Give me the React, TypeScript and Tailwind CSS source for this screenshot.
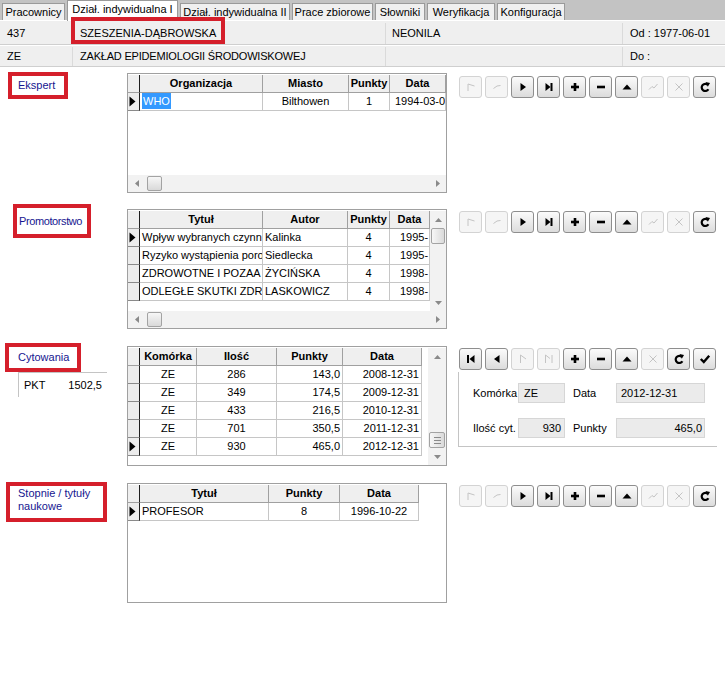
import React from 'react';

type Col = { title: string; w: string; cell: string };

const tabs = [
  { label: 'Pracownicy', w: 'w-[63px]' },
  { label: 'Dział. indywidualna I', w: 'w-[111px]', active: true },
  { label: 'Dział. indywidualna II', w: 'w-[110px]' },
  { label: 'Prace zbiorowe', w: 'w-[81px]' },
  { label: 'Słowniki', w: 'w-[50px]' },
  { label: 'Weryfikacja', w: 'w-[68px]' },
  { label: 'Konfiguracja', w: 'w-[68px]' },
];

const navStd = ['xfirst', 'xprior', 'next', 'last', 'plus', 'minus', 'up', 'xpost', 'xcancel', 'refresh'];
const navCyt = ['first', 'prior', 'xnext', 'xlast', 'plus', 'minus', 'up', 'xcancel', 'refresh', 'post'];

function Icon({ name }: { name: string }) {
  const g = '#c4c4c4';
  return (
    <svg width="14" height="14" viewBox="0 0 14 14">
      {name === 'first' && (
        <>
          <rect x="3" y="3" width="2" height="8" fill="#000" />
          <polygon points="10.5,3 5.5,7 10.5,11" fill="#000" />
        </>
      )}
      {name === 'prior' && <polygon points="9.5,3 4,7 9.5,11" fill="#000" />}
      {name === 'next' && <polygon points="4.5,3 10,7 4.5,11" fill="#000" />}
      {name === 'last' && (
        <>
          <polygon points="3.5,3 8.5,7 3.5,11" fill="#000" />
          <rect x="8.5" y="3" width="2" height="8" fill="#000" />
        </>
      )}
      {name === 'plus' && (
        <>
          <rect x="3" y="5.7" width="8" height="2.6" fill="#000" />
          <rect x="5.7" y="3" width="2.6" height="8" fill="#000" />
        </>
      )}
      {name === 'minus' && <rect x="3" y="5.7" width="8" height="2.6" fill="#000" />}
      {name === 'up' && <polygon points="2.5,9.5 7,4.5 11.5,9.5" fill="#000" />}
      {name === 'post' && <polyline points="2.8,7 5.8,10 11.2,3.8" fill="none" stroke="#000" strokeWidth="2.4" />}
      {name === 'refresh' && (
        <>
          <path d="M10 5 A3.6 3.6 0 1 0 10.4 9.2" fill="none" stroke="#000" strokeWidth="2.2" />
          <polygon points="7.6,2 12,3 9.8,6.8" fill="#000" />
        </>
      )}
      {name === 'xfirst' && <path d="M4 11 V4 L10.5 6" fill="none" stroke={g} strokeWidth="1" />}
      {name === 'xprior' && <path d="M3.5 8.5 L7 6 L10.5 5.5" fill="none" stroke={g} strokeWidth="1" />}
      {name === 'xnext' && <path d="M4.5 11 V3 L10 7" fill="none" stroke={g} strokeWidth="1" />}
      {name === 'xlast' && <path d="M3.5 11 V3 L8 6.5 M10 3 V11" fill="none" stroke={g} strokeWidth="1" />}
      {name === 'xpost' && <path d="M3 9.5 L6 6.5 L8 8 L11.5 4" fill="none" stroke={g} strokeWidth="1" />}
      {name === 'xcancel' && <path d="M3.5 3.5 L10.5 10.5 M10.5 3.5 L3.5 10.5" fill="none" stroke={g} strokeWidth="1" />}
    </svg>
  );
}

function Navigator({ icons }: { icons: string[] }) {
  return (
    <div className="flex gap-[3px]">
      {icons.map((n, i) => (
        <div
          key={i}
          className={
            n.startsWith('x')
              ? 'flex h-[22px] w-[23px] items-center justify-center rounded-[3px] border border-[#d3d3d3] bg-[#f5f5f5]'
              : 'flex h-[22px] w-[23px] items-center justify-center rounded-[3px] border border-[#8e8e8e] bg-linear-to-b from-[#fbfbfb] to-[#dcdcdc]'
          }
        >
          <Icon name={n} />
        </div>
      ))}
    </div>
  );
}

function Pointer() {
  return (
    <svg width="7" height="11" viewBox="0 0 7 11">
      <polygon points="0.5,0.5 6.5,5.5 0.5,10.5" fill="#000" />
    </svg>
  );
}

function HScroll() {
  return (
    <div className="flex h-[17px] shrink-0 items-center bg-[#f2f2f2]">
      <div className="flex w-[17px] justify-center">
        <svg width="4" height="7" viewBox="0 0 4 7">
          <polygon points="4,0 0,3.5 4,7" fill="#8a8a8a" />
        </svg>
      </div>
      <div className="ml-[2px] h-[15px] w-[15px] rounded-[2px] border border-[#a3a3a3] bg-linear-to-b from-[#f7f7f7] to-[#d9d9d9]" />
      <div className="flex-1" />
      <div className="flex w-[17px] justify-center">
        <svg width="4" height="7" viewBox="0 0 4 7">
          <polygon points="0,0 4,3.5 0,7" fill="#8a8a8a" />
        </svg>
      </div>
    </div>
  );
}

function VScroll({ thumb, w }: { thumb: 'top' | 'bottom'; w: string }) {
  const up = (
    <div className="flex h-[17px] items-center justify-center">
      <svg width="7" height="4" viewBox="0 0 7 4">
        <polygon points="0,4 3.5,0 7,4" fill="#8a8a8a" />
      </svg>
    </div>
  );
  const down = (
    <div className="flex h-[17px] items-center justify-center">
      <svg width="7" height="4" viewBox="0 0 7 4">
        <polygon points="0,0 3.5,4 7,0" fill="#8a8a8a" />
      </svg>
    </div>
  );
  const bar = (
    <div className="mx-px flex h-[16px] flex-col items-center justify-center gap-[2px] rounded-[2px] border border-[#a3a3a3] bg-linear-to-r from-[#f7f7f7] to-[#dadada]">
      {thumb === 'bottom' && (
        <>
          <div className="h-px w-[7px] bg-[#8a8a8a]" />
          <div className="h-px w-[7px] bg-[#8a8a8a]" />
          <div className="h-px w-[7px] bg-[#8a8a8a]" />
        </>
      )}
    </div>
  );
  return (
    <div className={`${w} flex shrink-0 flex-col bg-[#f2f2f2]`}>
      {up}
      {thumb === 'top' && bar}
      <div className="flex-1" />
      {thumb === 'bottom' && bar}
      {down}
    </div>
  );
}

function Grid({
  cols,
  rows,
  current,
  hScroll,
  vScroll,
  vw,
  selectFirst,
}: {
  cols: Col[];
  rows: string[][];
  current: number;
  hScroll?: boolean;
  vScroll?: 'top' | 'bottom';
  vw?: string;
  selectFirst?: boolean;
}) {
  return (
    <div className="flex h-[120px] w-[320px] flex-col border border-[#a0a0a0] bg-white pt-px">
      <div className="flex min-h-0 flex-1">
        <div className="min-w-0 flex-1 overflow-hidden">
          <div className="flex h-[18px]">
            <div className="h-[18px] w-[12px] shrink-0 border-r border-b border-r-[#1e1e1e] border-b-[#a0a0a0] bg-[#efefef]" />
            {cols.map((c) => (
              <div
                key={c.title}
                className={`${c.w} h-[18px] shrink-0 overflow-hidden whitespace-nowrap border-r border-b border-[#a0a0a0] bg-[#efefef] text-center font-bold leading-[17px]`}
              >
                {c.title}
              </div>
            ))}
          </div>
          {rows.map((r, i) => (
            <div key={i} className="flex h-[18px]">
              <div className="flex h-[18px] w-[12px] shrink-0 items-center justify-start border-r border-b border-r-[#1e1e1e] border-b-[#8a8a8a] bg-[#ececec] pl-px">
                {i === current && <Pointer />}
              </div>
              {cols.map((c, j) => (
                <div
                  key={j}
                  className={`${c.w} ${c.cell} h-[18px] shrink-0 overflow-hidden whitespace-nowrap border-r border-b border-[#c6c6c6] leading-[17px]`}
                >
                  {selectFirst && i === 0 && j === 0 ? (
                    <span className="inline-block h-[16px] bg-[#3399ff] px-px leading-[16px] text-white">{r[j]}</span>
                  ) : (
                    r[j]
                  )}
                </div>
              ))}
            </div>
          ))}
        </div>
        {vScroll && <VScroll thumb={vScroll} w={vw ?? 'w-[16px]'} />}
      </div>
      {hScroll && <HScroll />}
    </div>
  );
}

export default function App() {
  return (
    <div className="min-h-[691px] w-[725px] bg-white font-['Liberation_Sans',Arial,sans-serif] text-[11px] text-black">
      {/* tabs */}
      <div className="flex h-[20px] items-start gap-[2px] bg-[#c3c3c3] pl-[2px]">
        {tabs.map((t) =>
          t.active ? (
            <div
              key={t.label}
              className={`${t.w} relative z-10 h-[21px] border border-b-0 border-[#9a9a9a] bg-white pt-px text-center leading-[14px]`}
            >
              {t.label}
            </div>
          ) : (
            <div
              key={t.label}
              className={`${t.w} mt-[3px] h-[17px] border border-b-0 border-[#9a9a9a] bg-[#f0f0f0] text-center leading-[16px]`}
            >
              {t.label}
            </div>
          )
        )}
      </div>

      {/* employee header */}
      <div className="mt-px bg-[#efefef]">
        <div className="flex h-[24px] items-center border-b border-[#cfcfcf] pt-[2px]">
          <div className="w-[72px] pl-[7px]">437</div>
          <div className="relative flex h-full w-[313px] items-center border-l border-[#dadada] pl-[7px]">
            SZESZENIA-DĄBROWSKA
            <div className="absolute top-[-6px] left-[-2px] z-20 h-[27px] w-[154px] border-4 border-[#d51f2b]" />
          </div>
          <div className="flex h-full w-[237px] items-center border-l border-[#dadada] pl-[6px]">NEONILA</div>
          <div className="flex h-full flex-1 items-center border-l border-[#dadada] pl-[7px]">Od : 1977-06-01</div>
        </div>
        <div className="flex h-[22px] items-center border-t border-b border-t-white border-b-[#cfcfcf] pt-px">
          <div className="w-[72px] pl-[7px]">ZE</div>
          <div className="flex h-full w-[313px] items-center border-l border-[#dadada] pl-[7px] tracking-[-0.2px]">
            ZAKŁAD EPIDEMIOLOGII ŚRODOWISKOWEJ
          </div>
          <div className="h-full w-[237px] border-l border-[#dadada]" />
          <div className="flex h-full flex-1 items-center border-l border-[#dadada] pl-[7px]">Do :</div>
        </div>
      </div>

      {/* Ekspert */}
      <div className="mt-[5px] flex items-start">
        <div className="w-[127px] shrink-0">
          <div className="ml-[8px] flex h-[27px] w-[60px] items-center border-4 border-[#d51f2b] pl-[6px] text-[#161690]">
            Ekspert
          </div>
        </div>
        <div className="mt-px">
          <Grid
            cols={[
              { title: 'Organizacja', w: 'w-[123px]', cell: 'text-left px-[2px]' },
              { title: 'Miasto', w: 'w-[86px]', cell: 'text-center' },
              { title: 'Punkty', w: 'w-[41px]', cell: 'text-center' },
              { title: 'Data', w: 'w-[56px]', cell: 'text-left pl-[5px]' },
            ]}
            rows={[['WHO', 'Bilthowen', '1', '1994-03-0']]}
            current={0}
            hScroll
            selectFirst
          />
        </div>
        <div className="mt-[4px] ml-[12px]">
          <Navigator icons={navStd} />
        </div>
      </div>

      {/* Promotorstwo */}
      <div className="mt-[11px] flex items-start">
        <div className="w-[127px] shrink-0">
          <div className="ml-[13px] flex h-[34px] w-[78px] items-center border-4 border-[#d51f2b] pl-[2px] tracking-[-0.4px] text-[#161690]">
            Promotorstwo
          </div>
        </div>
        <div className="mt-[5px]">
          <Grid
            cols={[
              { title: 'Tytuł', w: 'w-[123px]', cell: 'text-left px-[2px]' },
              { title: 'Autor', w: 'w-[85px]', cell: 'text-left px-[2px]' },
              { title: 'Punkty', w: 'w-[42px]', cell: 'text-center' },
              { title: 'Data', w: 'w-[40px]', cell: 'text-left pl-[10px]' },
            ]}
            rows={[
              ['Wpływ wybranych czynn', 'Kalinka', '4', '1995-'],
              ['Ryzyko wystąpienia poro', 'Siedlecka', '4', '1995-'],
              ['ZDROWOTNE I POZAA', 'ŻYCIŃSKA', '4', '1998-'],
              ['ODLEGŁE SKUTKI ZDR', 'LASKOWICZ', '4', '1998-'],
            ]}
            current={0}
            hScroll
            vScroll="top"
            vw="w-[16px]"
          />
        </div>
        <div className="mt-[7px] ml-[12px]">
          <Navigator icons={navStd} />
        </div>
      </div>

      {/* Cytowania */}
      <div className="mt-[14px] flex items-start">
        <div className="w-[127px] shrink-0">
          <div className="ml-[5px] flex h-[29px] w-[76px] items-center border-4 border-[#d51f2b] pl-[9px] text-[#161690]">
            Cytowania
          </div>
          <div className="ml-[18px] flex h-[25px] w-[89px] items-center border-t border-l border-[#c4c4c4]">
            <span className="ml-[5px]">PKT</span>
            <span className="mr-[5px] ml-auto">1502,5</span>
          </div>
        </div>
        <div className="mt-[3px]">
          <Grid
            cols={[
              { title: 'Komórka', w: 'w-[57px]', cell: 'text-center' },
              { title: 'Ilość', w: 'w-[80px]', cell: 'text-center' },
              { title: 'Punkty', w: 'w-[66px]', cell: 'text-right pr-[2px]' },
              { title: 'Data', w: 'w-[79px]', cell: 'text-right pr-[2px]' },
            ]}
            rows={[
              ['ZE', '286', '143,0', '2008-12-31'],
              ['ZE', '349', '174,5', '2009-12-31'],
              ['ZE', '433', '216,5', '2010-12-31'],
              ['ZE', '701', '350,5', '2011-12-31'],
              ['ZE', '930', '465,0', '2012-12-31'],
            ]}
            current={4}
            vScroll="bottom"
            vw="w-[18px]"
          />
        </div>
        <div className="mt-[5px] ml-[11px] w-[259px]">
          <div className="ml-px">
            <Navigator icons={navCyt} />
          </div>
          <div className="mt-[2px] flex h-[75px] flex-col gap-[15px] border-b border-l border-[#c4c4c4] pt-[11px] pl-[14px]">
            <div className="flex h-[20px] items-center">
              <span className="w-[45px]">Komórka</span>
              <div className="h-[20px] w-[47px] border border-[#d6d6d6] bg-[#ebebeb] pl-[5px] leading-[18px]">ZE</div>
              <span className="ml-[8px] w-[43px]">Data</span>
              <div className="h-[20px] w-[89px] border border-[#d6d6d6] bg-[#ebebeb] pl-[4px] leading-[18px]">2012-12-31</div>
            </div>
            <div className="flex h-[20px] items-center">
              <span className="w-[45px]">Ilość cyt.</span>
              <div className="h-[20px] w-[47px] border border-[#d6d6d6] bg-[#ebebeb] pr-[3px] text-right leading-[18px]">930</div>
              <span className="ml-[8px] w-[43px]">Punkty</span>
              <div className="h-[20px] w-[89px] border border-[#d6d6d6] bg-[#ebebeb] pr-[2px] text-right leading-[18px]">465,0</div>
            </div>
          </div>
        </div>
      </div>

      {/* Stopnie / tytuły naukowe */}
      <div className="mt-[16px] flex items-start">
        <div className="w-[127px] shrink-0">
          <div className="ml-[6px] h-[40px] w-[101px] border-4 border-[#d51f2b] pt-px pl-[8px] leading-[13px] text-[#161690]">
            Stopnie / tytuły
            <br />
            naukowe
          </div>
        </div>
        <div className="mt-px">
          <Grid
            cols={[
              { title: 'Tytuł', w: 'w-[129px]', cell: 'text-left px-[2px]' },
              { title: 'Punkty', w: 'w-[71px]', cell: 'text-center' },
              { title: 'Data', w: 'w-[79px]', cell: 'text-center' },
            ]}
            rows={[['PROFESOR', '8', '1996-10-22']]}
            current={0}
          />
        </div>
        <div className="mt-[3px] ml-[12px]">
          <Navigator icons={navStd} />
        </div>
      </div>
    </div>
  );
}
